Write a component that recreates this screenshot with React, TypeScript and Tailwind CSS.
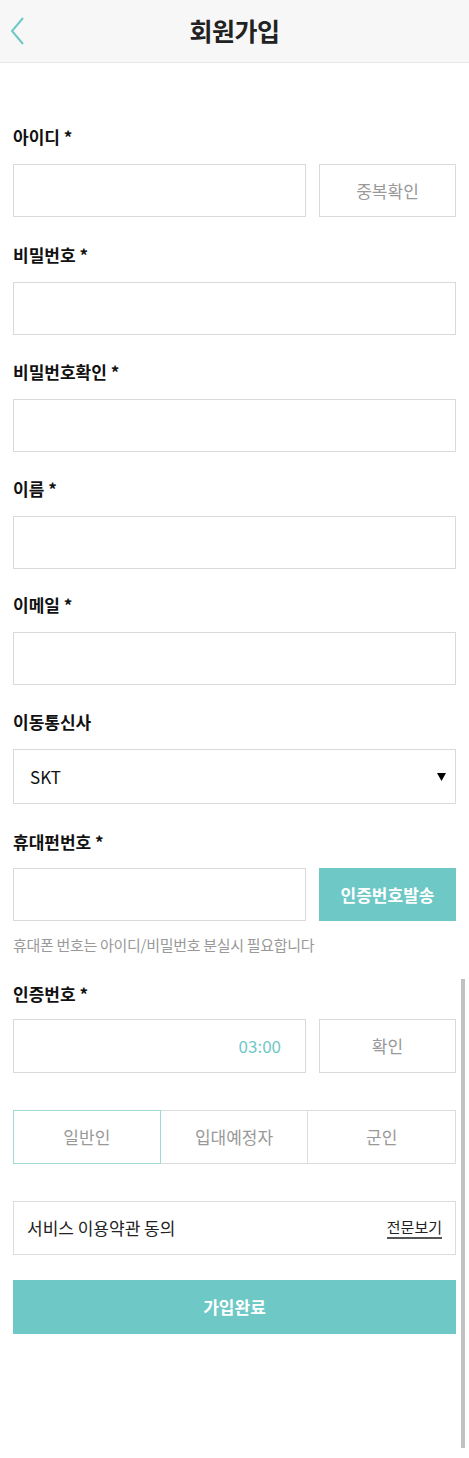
import { useState } from "react";

const font = { fontFamily: '"Noto Sans CJK KR", "Noto Sans", sans-serif' };

function Label({ children, mb = "mb-[15px]" }: { children: React.ReactNode; mb?: string }) {
  return (
    <div className={"h-6 leading-6 text-[17px] font-bold text-[#111] " + mb}>
      {children}
    </div>
  );
}

function Field({ label, mb }: { label: string; mb: string }) {
  return (
    <div className={mb}>
      <Label>{label}</Label>
      <input className="block w-full h-[53px] border border-[#d9d9d9] bg-white outline-none px-3" />
    </div>
  );
}

export default function App() {
  const [tab, setTab] = useState(0);
  const tabs = ["일반인", "입대예정자", "군인"];

  return (
    <div className="relative w-[469px] min-h-[1458px] bg-white" style={font}>
      <header className="relative h-[63px] bg-[#f7f7f7] border-b border-[#e8e8e8] flex items-center justify-center">
        <button className="absolute left-[9px] top-[16px]" aria-label="back">
          <svg width="18" height="30" viewBox="0 0 18 30">
            <polyline
              points="14,2 3,15 14,28"
              fill="none"
              stroke="#6ec8c6"
              strokeWidth="2"
            />
          </svg>
        </button>
        <h1 className="text-[25px] font-bold text-[#222] tracking-[-0.5px]">회원가입</h1>
      </header>

      <main className="px-[13px] pt-[62px]">
        <div className="mb-[26px]">
          <Label>아이디 *</Label>
          <div className="flex gap-[13px]">
            <input className="flex-1 min-w-0 h-[53px] border border-[#d9d9d9] outline-none px-3" />
            <button className="w-[137px] h-[53px] border border-[#d9d9d9] text-[17px] text-[#999]">
              중복확인
            </button>
          </div>
        </div>

        <Field label="비밀번호 *" mb="mb-[25px]" />
        <Field label="비밀번호확인 *" mb="mb-[25px]" />
        <Field label="이름 *" mb="mb-[24px]" />
        <Field label="이메일 *" mb="mb-[25px]" />

        <div className="mb-[26px]">
          <Label mb="mb-[15px]">이동통신사</Label>
          <div className="relative h-[55px] border border-[#d9d9d9] flex items-center pl-4 text-[17px] text-[#111]">
            SKT
            <svg
              className="absolute right-[9px] top-[23px]"
              width="9"
              height="8"
              viewBox="0 0 9 8"
            >
              <polygon points="0,0 9,0 4.5,8" fill="#000" />
            </svg>
          </div>
        </div>

        <div>
          <Label mb="mb-[14px]">휴대펀번호 *</Label>
          <div className="flex gap-[13px]">
            <input className="flex-1 min-w-0 h-[53px] border border-[#d9d9d9] outline-none px-3" />
            <button className="w-[137px] h-[53px] bg-[#6ec8c6] text-[17px] font-bold text-white">
              인증번호발송
            </button>
          </div>
          <p className="mt-[14px] h-5 leading-5 text-[15px] text-[#999] tracking-[-0.3px]">
            휴대폰 번호는 아이디/비밀번호 분실시 필요합니다
          </p>
        </div>

        <div className="mt-[27px]">
          <Label mb="mb-[13px]">인증번호 *</Label>
          <div className="flex gap-[13px]">
            <div className="flex-1 h-[54px] border border-[#d9d9d9] flex items-center justify-end pr-6 text-[17px] text-[#6ec8c6]">
              03:00
            </div>
            <button className="w-[137px] h-[54px] border border-[#d9d9d9] text-[17px] text-[#999]">
              확인
            </button>
          </div>
        </div>

        <div className="mt-[37px] grid grid-cols-3 h-[54px]">
          {tabs.map((t, i) => (
            <button
              key={t}
              onClick={() => setTab(i)}
              className={
                i === tab
                  ? "border border-[#9fd9d8] text-[17px] text-[#999]"
                  : "border border-[#dcdcdc] border-l-0 text-[17px] text-[#999]"
              }
            >
              {t}
            </button>
          ))}
        </div>

        <div className="mt-[37px] h-[54px] border border-[#dcdcdc] flex items-center justify-between px-[13px]">
          <span className="text-[17px] text-[#222]">서비스 이용약관 동의</span>
          <span className="text-[15px] text-[#222] border-b-2 border-[#555] leading-5">전문보기</span>
        </div>

        <button className="mt-[25px] w-full h-[54px] bg-[#6ec8c6] text-[17px] font-bold text-white">
          가입완료
        </button>
      </main>

      <div className="absolute left-[461px] top-[979px] w-[4px] h-[469px] bg-[#c1c1c1]" />
    </div>
  );
}
